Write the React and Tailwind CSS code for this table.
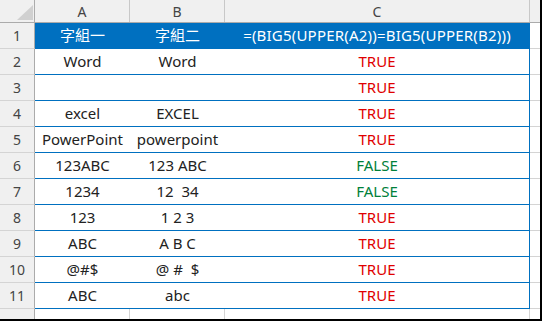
const rows = [
  ['字組一', '字組二', '=(BIG5(UPPER(A2))=BIG5(UPPER(B2)))'],
  ['Word', 'Word', 'TRUE'],
  ['', '', 'TRUE'],
  ['excel', 'EXCEL', 'TRUE'],
  ['PowerPoint', 'powerpoint', 'TRUE'],
  ['123ABC', '123 ABC', 'FALSE'],
  ['1234', '12  34', 'FALSE'],
  ['123', '1 2 3', 'TRUE'],
  ['ABC', 'A B C', 'TRUE'],
  ['@#$', '@ #  $', 'TRUE'],
  ['ABC', 'abc', 'TRUE'],
];

const font = { fontFamily: '"Noto Sans", "Noto Sans CJK TC", sans-serif' };

export default function App() {
  return (
    <div
      className="w-[542px] h-[321px] bg-white border-r-2 border-b-2 border-black overflow-hidden text-[#222]"
      style={font}
    >
      {/* column headers */}
      <div className="flex h-[23px] bg-[#f0f0f0] border-b border-[#ababab] text-[14px] text-[#444]">
        <div className="w-[35px] border-r border-[#ababab] relative">
          <svg className="absolute left-[17px] top-[5px]" width="16" height="15" viewBox="0 0 16 15">
            <polygon points="0,15 16,15 16,0" fill="#d0d0d0" />
          </svg>
        </div>
        <div className="w-[95px] border-r border-[#c8c8c8] flex items-center justify-center">A</div>
        <div className="w-[95px] border-r border-[#c8c8c8] flex items-center justify-center">B</div>
        <div className="w-[305px] border-r border-[#c8c8c8] flex items-center justify-center">C</div>
        <div className="flex-1" />
      </div>

      {rows.map((r, i) => {
        const head = i === 0;
        const c = r[2];
        const cColor = head ? 'text-white tracking-[0.2px]' : c === 'TRUE' ? 'text-[#e00000]' : 'text-[#00803a]';
        return (
          <div key={i} className="flex h-[26px]">
            <div className="w-[35px] bg-[#f0f0f0] border-r border-[#ababab] border-b border-b-[#d4d4d4] flex items-end justify-center pb-[2px] text-[14px] text-[#444]">
              {i + 1}
            </div>
            <div className={`w-[95px] border-b border-[#0070c0] flex items-center justify-center text-[15px] whitespace-pre ${head ? 'bg-[#0070c0] text-white' : ''}`}>
              {r[0]}
            </div>
            <div className={`w-[95px] border-b border-[#0070c0] flex items-center justify-center text-[15px] whitespace-pre ${head ? 'bg-[#0070c0] text-white' : ''}`}>
              {r[1]}
            </div>
            <div className={`w-[305px] border-b border-r border-[#0070c0] flex items-center justify-center text-[15px] ${cColor} ${head ? 'bg-[#0070c0]' : ''}`}>
              {c}
            </div>
            <div className="flex-1 border-b border-[#d4d4d4]" />
          </div>
        );
      })}

      {/* partial row 12 */}
      <div className="flex h-[10px]">
        <div className="w-[35px] bg-[#f0f0f0] border-r border-[#ababab]" />
        <div className="w-[95px] border-r border-[#d4d4d4]" />
        <div className="w-[95px] border-r border-[#d4d4d4]" />
        <div className="w-[305px] border-r border-[#d4d4d4]" />
        <div className="flex-1" />
      </div>
    </div>
  );
}
